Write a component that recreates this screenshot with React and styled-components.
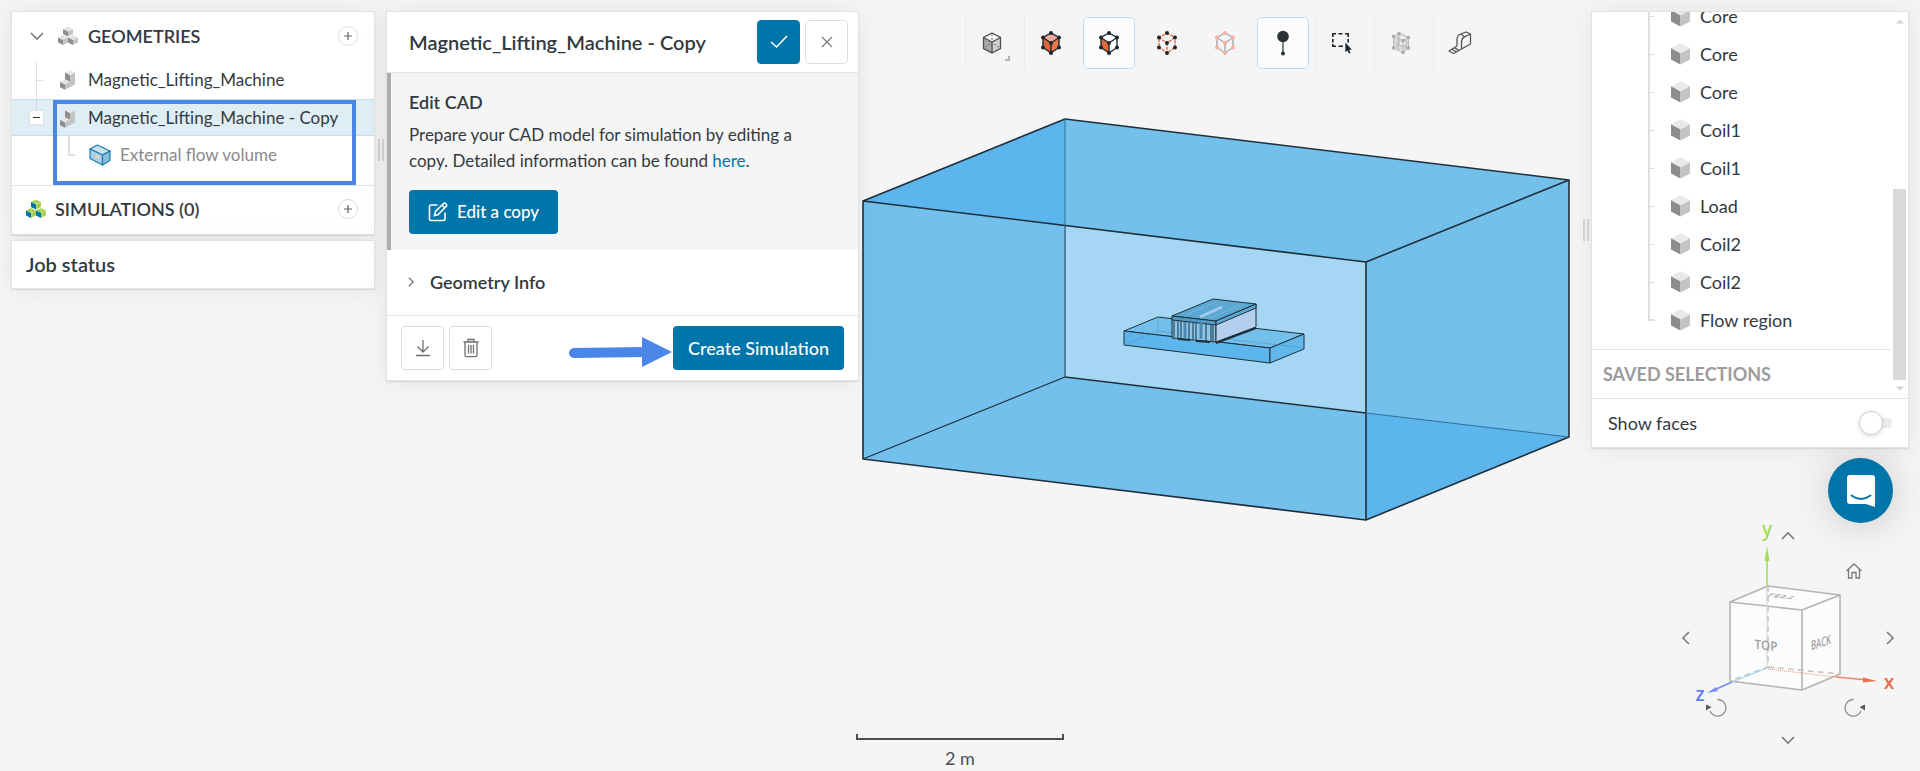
import React from "react";
import styled, { createGlobalStyle, css } from "styled-components";

const bodies = ["Core", "Core", "Core", "Coil1", "Coil1", "Load", "Coil2", "Coil2", "Flow region"];

const IsoCube = ({ x, y, s, top, left, right }) => {
  const h = s / 2;
  return (
    <g>
      <polygon fill={top} points={`${x},${y - s} ${x + s},${y - h} ${x},${y} ${x - s},${y - h}`} />
      <polygon fill={left} points={`${x - s},${y - h} ${x},${y} ${x},${y + s} ${x - s},${y + h}`} />
      <polygon fill={right} points={`${x + s},${y - h} ${x},${y} ${x},${y + s} ${x + s},${y + h}`} />
    </g>
  );
};

const CubesIcon = ({ top, left, right, dots }) => (
  <svg width="20" height="20" viewBox="0 0 20 20" aria-hidden="true">
    <IsoCube x={10} y={5.5} s={5} top={top} left={left} right={right} />
    <IsoCube x={5} y={14} s={5} top={top} left={left} right={right} />
    <IsoCube x={15} y={14} s={5} top={top} left={left} right={right} />
    {dots && (
      <g fill="#e0603a">
        {[[8, 3], [12, 2.6], [13, 6.5], [3.5, 11.4], [7, 11.6], [8, 15.2], [13.5, 11.4], [17, 11.8], [17.8, 15], [12, 8.6]].map(
          ([cx, cy]) => (
            <circle key={`${cx}-${cy}`} cx={cx} cy={cy} r="0.6" />
          )
        )}
      </g>
    )}
  </svg>
);

const PartIcon = () => (
  <svg width="16" height="20" viewBox="0 0 16 20" aria-hidden="true">
    <polygon fill="#e9e9e9" points="5,2.6 10,0 15,2.6 10,5.2" />
    <polygon fill="#8d8d8d" points="5,2.6 10,5.2 10,11.8 5,9.4" />
    <polygon fill="#e4e4e4" points="0,12 5,9.4 10,11.8 5,14.6" />
    <polygon fill="#8d8d8d" points="0,12 5,14.6 5,19.8 0,17.2" />
    <polygon fill="#c3c3c3" points="15,2.6 15,14.6 5,19.8 5,14.6 10,11.8 10,5.2" />
  </svg>
);

const FlowVolumeIcon = () => (
  <svg width="22" height="22" viewBox="0 0 22 22" aria-hidden="true">
    <g stroke="#1b7db3" strokeWidth="1.2" strokeLinejoin="round">
      <polygon fill="#c9e0ef" points="1,5 8.5,1 21,7 13.5,11" />
      <polygon fill="#a9cfe6" points="1,5 13.5,11 13.5,21 1,14.5" />
      <polygon fill="#86bcdc" points="13.5,11 21,7 21,16.5 13.5,21" />
    </g>
    <polygon fill="#d9d3cd" points="6,11 9,10.5 11,12 11,15.5 6,13.5" />
  </svg>
);

const BodyIcon = () => (
  <svg width="19" height="22" viewBox="0 0 19 22" aria-hidden="true">
    <polygon fill="#e9e9e9" points="9.5,0 19,5.2 9.5,10.4 0,5.2" />
    <polygon fill="#8c8c8c" points="0,5.2 9.5,10.4 9.5,21.6 0,16.4" />
    <polygon fill="#c4c4c4" points="19,5.2 9.5,10.4 9.5,21.6 19,16.4" />
  </svg>
);

const Chevron = ({ rotate = 0, width = 14, color = "#7a7a7a", stroke = 1.6 }) => (
  <svg width={width} height={width} viewBox="0 0 14 14" aria-hidden="true">
    <path
      d="M1 4 L7 10 L13 4"
      fill="none"
      stroke={color}
      strokeWidth={stroke}
      transform={`rotate(${rotate} 7 7)`}
    />
  </svg>
);

const PlusIcon = () => (
  <svg width="8" height="8" viewBox="0 0 8 8" aria-hidden="true">
    <path d="M4 0V8M0 4H8" stroke="#5f6366" strokeWidth="1.2" />
  </svg>
);

const vertices = [[11, 2], [19, 6.5], [19, 16.5], [11, 22], [3, 16.5], [3, 6.5], [11, 12]];

const PickIcon = ({ top = "none", left = "none", right = "none", line, dash, dot }) => (
  <svg width="22" height="24" viewBox="0 0 22 24" aria-hidden="true">
    <polygon points="11,2 19,6.5 11,12 3,6.5" fill={top} />
    <polygon points="3,6.5 11,12 11,22 3,16.5" fill={left} />
    <polygon points="19,6.5 11,12 11,22 19,16.5" fill={right} />
    <path
      d="M11 2L19 6.5V16.5L11 22L3 16.5V6.5ZM3 6.5L11 12L19 6.5M11 12V22"
      fill="none"
      stroke={line}
      strokeWidth="1.4"
      strokeDasharray={dash}
    />
    {vertices.map(([cx, cy]) => (
      <circle key={`${cx}-${cy}`} cx={cx} cy={cy} r="2" fill={dot} />
    ))}
  </svg>
);

const RenderIcon = () => (
  <svg width="22" height="24" viewBox="0 0 22 24" aria-hidden="true">
    <polygon points="11,2 19.5,6.5 11,11 2.5,6.5" fill="#f7f7f7" />
    <polygon points="2.5,6.5 11,11 11,22 2.5,17.5" fill="#a9a9a9" />
    <polygon points="19.5,6.5 11,11 11,22 19.5,17.5" fill="#cfcfcf" />
    <path
      d="M11 2L19.5 6.5V17.5L11 22L2.5 17.5V6.5ZM2.5 6.5L11 11L19.5 6.5M11 11V22"
      fill="none"
      stroke="#4e4e4e"
      strokeWidth="1.3"
    />
    <path d="M11 3V9M4 16L9 13M13 13L18 16" stroke="#666" strokeDasharray="2 2" />
  </svg>
);

const PinIcon = () => (
  <svg width="14" height="26" viewBox="0 0 14 26" aria-hidden="true">
    <path d="M7 6V23" stroke="#2b3135" strokeWidth="1.2" />
    <circle cx="7" cy="6.5" r="5.8" fill="#2b3135" />
    <circle cx="7" cy="23.5" r="2" fill="#2b3135" />
  </svg>
);

const BoxSelectIcon = () => (
  <svg width="22" height="22" viewBox="0 0 22 22" aria-hidden="true">
    <path
      d="M1.8 5V1.8H5M7.5 1.8H11.5M14 1.8H17.2V5M1.8 7V10.5M17.2 7V10.5M1.8 12V14.2H5M7.5 14.2H12"
      fill="none"
      stroke="#1d262c"
      strokeWidth="1.6"
    />
    <path d="M14.4 10.5V20.2L16.5 18.4L17.9 21.6L19.5 20.9L18.1 17.8H20.8Z" fill="#1d262c" />
  </svg>
);

const MeshIcon = () => (
  <svg width="20" height="24" viewBox="0 0 20 24" aria-hidden="true">
    <path
      d="M8 2L17.5 6.5V17L12 21.5L2.5 17V5.5ZM2.5 5.5L12 9.5L17.5 6.5M12 9.5V21.5M7.2 7.5V19M2.5 11L12 15.5L17.5 12M15 8V19M8 2V14L2.5 17M8 14L17.5 17"
      fill="#dedede"
      stroke="#b9b9b9"
    />
    {[[8, 2.5], [17.5, 6.5], [17.5, 17], [12, 21.5], [2.5, 17], [2.5, 5.5], [12, 9.5]].map(([cx, cy]) => (
      <circle key={`${cx}-${cy}`} cx={cx} cy={cy} r="1.8" fill="#ababab" />
    ))}
  </svg>
);

const TapeIcon = () => (
  <svg width="24" height="24" viewBox="0 0 24 24" aria-hidden="true">
    <path
      d="M9 15V8Q9.5 4 12.5 3L18 1L22.5 3V13L13.500 18V10Q13.800 7 16.500 5.800L22.5 3M12.500 3L16.500 5.800M9 15L1 20L5.500 22.500L13.500 18M4 18.300L8.500 21M6.500 16.600L11 19.500"
      fill="none"
      stroke="#4f5357"
      strokeWidth="1.3"
      strokeLinejoin="round"
    />
  </svg>
);

const tools = [
  [{ name: "Render mode", icon: <RenderIcon />, menu: true }],
  [
    { name: "Select volumes", icon: <PickIcon top="#f0aaa0" left="#e2683a" right="#e8794e" line="#1d262c" dot="#1d262c" /> },
    { name: "Select faces", icon: <PickIcon left="#e2683a" top="#fff" right="#fff" line="#1d262c" dot="#1d262c" />, active: true },
    { name: "Select edges", icon: <PickIcon line="#e8683c" dash="3 1" dot="#1d262c" /> },
    { name: "Select vertices", icon: <PickIcon line="#a8a8a8" dot="#f7aea3" /> },
    { name: "Probe point", icon: <PinIcon />, active: true },
  ],
  [{ name: "Box select", icon: <BoxSelectIcon /> }],
  [{ name: "Mesh", icon: <MeshIcon /> }],
  [{ name: "Measure", icon: <TapeIcon /> }],
];

const Model = () => (
  <ModelSvg viewBox="861 116 710 405" role="img" aria-label="Flow region around the lifting machine">
    <polygon fill="#74c0ed" points="863,200 1065,118 1569,179 1569,436 1366,519 863,458" />
    <polygon fill="#a5d6f3" points="1065,225 1366,261 1366,412 1065,376" />
    <polygon fill="#5cb5ec" points="863,200 1065,118 1065,225" />
    <polygon fill="#5cb5ec" points="1366,412 1569,436 1366,519" />
    <g fill="none" stroke="#1f2f3a" strokeWidth="1.6" strokeLinejoin="round">
      <path d="M863 200L1065 118L1569 179L1366 261ZM863 200V458L1366 519L1569 436V179M1366 261V519" />
      <path d="M863 458L1065 376L1366 412" strokeWidth="1.3" />
      <path d="M1065 225V376" stroke="#2f5873" strokeWidth="1.3" />
      <path d="M1065 118V225M1366 412L1569 436" stroke="#2f6f99" strokeWidth="1" />
    </g>
    <g stroke="#1f2f3a" strokeLinejoin="round">
      <polygon fill="#74c0ed" points="1124,330 1158,316 1304,333 1270,347" />
      <polygon fill="#5cb5ec" points="1124,330 1270,347 1270,362 1124,344" />
      <polygon fill="#62b8ec" points="1270,347 1304,333 1304,348 1270,362" />
      <path d="M1124 344L1158 330L1304 347M1158 316V330" stroke="#4f94bd" fill="none" strokeWidth="0.6" />
      <polygon fill="#8ec6e8" points="1172,316 1216,321 1216,341 1172,337" />
      <polygon fill="#b4cfee" points="1216,321 1256,303 1256,326 1216,341" />
      <polygon fill="#5ba9d3" points="1172,315 1213,298 1256,303 1216,320" />
      <polygon fill="#4f9cc9" points="1172,315 1216,320 1216,324 1172,319" />
      <polygon fill="#5ba9d3" points="1216,320 1256,303 1256,307 1216,324" />
    </g>
    <path d="M1200 316L1222 306" stroke="#a3cdec" strokeWidth="3" />
    <path d="M1186 314L1214 302M1208 318L1240 304" stroke="#79b7da" />
    <path d="M1174 320V337M1178 320V337M1181 320V338M1189 321V338M1193 321V338M1196 321V339M1206 322V340M1211 323V341M1213 323V341" stroke="#294b61" strokeWidth="1.2" />
    <path d="M1185 321V337M1201 322V338" stroke="#4d89b0" strokeWidth="3" />
    <path d="M1178 338L1190 339M1196 340L1210 341M1216 342L1256 327" stroke="#1f2f3a" strokeWidth="2" />
  </ModelSvg>
);

const ViewCube = () => (
  <svg width="218" height="232" viewBox="1680 520 218 232" overflow="visible" role="img" aria-label="View cube">
    <polygon fill="#fbfcfc" points="1730,601 1768,585 1840,594 1840,673 1802,689 1730,680" />
    <g fill="none" stroke="#b3b3b3" strokeWidth="1.6" strokeLinejoin="round">
      <path d="M1730 601L1768 585L1840 594L1802 609ZM1730 601V680L1802 689V609M1802 689L1840 673V594" />
      <path d="M1768 585V666L1730 680M1768 666L1840 673" stroke="#c6c6c6" strokeDasharray="6 4" />
    </g>
    <path d="M1767 586V666" stroke="#d3d3d3" />
    <path d="M1767 585V558" stroke="#a3dd57" strokeWidth="1.6" />
    <polygon fill="#a3dd57" points="1767,545 1769.5,560 1764.5,560" />
    <path d="M1767 667L1732 681" stroke="#92cdf2" />
    <path d="M1732 681L1712 690" stroke="#6d8df5" strokeWidth="1.4" />
    <polygon fill="#7b93f7" points="1707,692 1716,686 1718,690" />
    <path d="M1768 668L1836 676" stroke="#f08a70" strokeDasharray="1 1" />
    <path d="M1836 676L1868 679" stroke="#ee8468" strokeWidth="1.6" />
    <polygon fill="#ea7152" points="1877,680 1863,681.5 1863,676.5" />
    <AxisLabel x="1767" y="535" fill="#a3dd57">y</AxisLabel>
    <AxisLabel x="1889" y="688" fill="#ea6a45">x</AxisLabel>
    <AxisLabel x="1700" y="700" fill="#5c7ff3">z</AxisLabel>
    <FaceLabel transform="matrix(0.9 0.1 0 1 1766 649)">TOP</FaceLabel>
    <FaceLabel transform="matrix(0.6 -0.2 0 1 1821 646)">BACK</FaceLabel>
    <FaceLabel transform="matrix(0.9 0.1 0.6 -0.3 1784 594)">LEFT</FaceLabel>
  </svg>
);

const RotateIcon = ({ flip }) => (
  <svg width="22" height="20" viewBox="0 0 22 20" aria-hidden="true">
    <g transform={flip ? "translate(22 0) scale(-1 1)" : undefined}>
      <path d="M12.5 1.5A8.3 8.3 0 1 1 5 13" fill="none" stroke="#8e8e8e" strokeWidth="1.3" />
      <path d="M1 6.5L6.5 9L1 12.5Z" fill="#5a5a5a" />
    </g>
  </svg>
);

const App = () => (
  <>
    <GlobalStyle />
    <Page>
      <Workspace>
        <Column>
          <Panel>
            <SectionRow>
              <ToggleButton aria-label="Collapse geometries">
                <Chevron />
              </ToggleButton>
              <IconCell>
                <CubesIcon top="#e4e4e4" left="#8f8f8f" right="#c4c4c4" />
              </IconCell>
              <SectionTitle>GEOMETRIES</SectionTitle>
              <AddButton aria-label="Add geometry">
                <PlusIcon />
              </AddButton>
            </SectionRow>
            <Tree>
              <TreeRow>
                <GuideCell>
                  <Guide $narrow />
                </GuideCell>
                <IconCell>
                  <PartIcon />
                </IconCell>
                Magnetic_Lifting_Machine
              </TreeRow>
              <TreeRow $selected>
                <GuideCell $line>
                  <CollapseButton aria-label="Collapse copy">
                    <svg width="7" height="1" aria-hidden="true">
                      <rect width="7" height="1" fill="#333" />
                    </svg>
                  </CollapseButton>
                </GuideCell>
                <IconCell>
                  <PartIcon />
                </IconCell>
                Magnetic_Lifting_Machine - Copy
              </TreeRow>
              <TreeRow $child>
                <Guide $last />
                <IconCell $wide>
                  <FlowVolumeIcon />
                </IconCell>
                External flow volume
              </TreeRow>
            </Tree>
            <SectionRow $divided>
              <CubesIcon top="#a6e05a" left="#0073a8" right="#a6d95c" dots />
              <SectionTitle $inset>SIMULATIONS (0)</SectionTitle>
              <AddButton aria-label="Add simulation">
                <PlusIcon />
              </AddButton>
            </SectionRow>
            <Highlight />
          </Panel>
          <Panel>
            <JobStatus>Job status</JobStatus>
          </Panel>
        </Column>

        <DragHandle $top={128} />

        <Column>
          <Panel>
            <PanelHeader>
              <PanelTitle>Magnetic_Lifting_Machine - Copy</PanelTitle>
              <SquareButton $primary aria-label="Apply">
                <svg width="18" height="14" viewBox="0 0 18 14" aria-hidden="true">
                  <path d="M1 7L6.5 12L17 1" fill="none" stroke="#fff" strokeWidth="1.6" />
                </svg>
              </SquareButton>
              <SquareButton aria-label="Close">
                <svg width="12" height="12" viewBox="0 0 12 12" aria-hidden="true">
                  <path d="M1 1L11 11M11 1L1 11" stroke="#7d7d7d" strokeWidth="1.3" />
                </svg>
              </SquareButton>
            </PanelHeader>
            <EditSection>
              <SubTitle>Edit CAD</SubTitle>
              <Description>
                Prepare your CAD model for simulation by editing a copy. Detailed information can be found{" "}
                <a href="#here">here</a>.
              </Description>
              <PrimaryButton>
                <svg width="20" height="20" viewBox="0 0 20 20" fill="none" stroke="#fff" strokeWidth="1.6" aria-hidden="true">
                  <path d="M9.5 3H3Q1.5 3 1.5 4.5V17Q1.5 18.5 3 18.5H15.5Q17 18.5 17 17V10.5" />
                  <path d="M6.5 13.5L7.5 9.5L15.5 1.5Q16.5 0.7 17.8 1.8Q19.2 3.2 18.3 4.3L10.2 12.5ZM14 3L16.8 5.8" />
                </svg>
                Edit a copy
              </PrimaryButton>
            </EditSection>
            <InfoRow>
              <Chevron rotate={-90} width={10} stroke={1.8} />
              Geometry Info
            </InfoRow>
            <PanelFooter>
              <SquareButton aria-label="Download">
                <svg width="16" height="18" viewBox="0 0 16 18" fill="none" stroke="#6e6e6e" strokeWidth="1.3" aria-hidden="true">
                  <path d="M8 1V12.5M2.5 7.5L8 13L13.5 7.5M1 16.5H15" />
                </svg>
              </SquareButton>
              <SquareButton aria-label="Delete">
                <svg width="16" height="20" viewBox="0 0 16 20" fill="none" stroke="#6e6e6e" strokeWidth="1.3" aria-hidden="true">
                  <path d="M0.5 4H15.5M5 3.5V1.5H11V3.5M2 4V17Q2 18.7 3.7 18.7H12.3Q14 18.7 14 17V4M5.5 7V15.5M8 7V15.5M10.5 7V15.5" />
                </svg>
              </SquareButton>
              <Spacer />
              <Pointer viewBox="0 0 103 31" aria-hidden="true">
                <path d="M5 16L76 15" stroke="#4a86e8" strokeWidth="10" strokeLinecap="round" />
                <polygon points="73,0 103,15 73,30" fill="#4a86e8" />
              </Pointer>
              <PrimaryButton $compact>Create Simulation</PrimaryButton>
            </PanelFooter>
          </Panel>
        </Column>

        <Viewer>
          <Toolbar>
            {tools.map((group) => (
              <ToolGroup key={group[0].name}>
                {group.map((tool) => (
                  <ToolButton key={tool.name} aria-label={tool.name} $active={tool.active}>
                    {tool.icon}
                    {tool.menu && <MenuMark />}
                  </ToolButton>
                ))}
              </ToolGroup>
            ))}
          </Toolbar>
          <Model />
        </Viewer>

        <DragHandle $top={208} />

        <Column>
          <Panel>
            <ScrollArea>
              <ScrollContent>
                <BodyList>
                  {bodies.map((body, i) => (
                    <TreeRow as="li" key={i} $body>
                      <Guide $last={i === bodies.length - 1} />
                      <IconCell $wide>
                        <BodyIcon />
                      </IconCell>
                      {body}
                    </TreeRow>
                  ))}
                </BodyList>
                <SavedSelections>SAVED SELECTIONS</SavedSelections>
              </ScrollContent>
              <ScrollBar>
                <svg width="8" height="5" viewBox="0 0 8 5" aria-hidden="true">
                  <path d="M0 4.5L4 0.5L8 4.5Z" fill="#cfcfcf" />
                </svg>
                <ScrollThumb />
                <svg width="8" height="5" viewBox="0 0 8 5" aria-hidden="true">
                  <path d="M0 0.5L4 4.5L8 0.5Z" fill="#cfcfcf" />
                </svg>
              </ScrollBar>
            </ScrollArea>
            <FacesRow>
              <label htmlFor="show-faces">Show faces</label>
              <Switch id="show-faces" type="checkbox" />
            </FacesRow>
          </Panel>
          <ChatButton aria-label="Open chat">
            <svg width="30" height="34" viewBox="0 0 30 34" aria-hidden="true">
              <path d="M4 1H26Q29 1 29 4V33L20 30H4Q1 30 1 27V4Q1 1 4 1Z" fill="#fff" />
              <path d="M5.5 21.5Q15 28.5 24.5 21.5" fill="none" stroke="#0075a9" strokeWidth="2" strokeLinecap="round" />
            </svg>
          </ChatButton>
          <ViewNav>
            <ViewCube />
            <NavButton aria-label="Rotate up" $x={108} $y={15}>
              <Chevron rotate={180} />
            </NavButton>
            <NavButton aria-label="Home view" $x={174} $y={50}>
              <svg width="16" height="16" viewBox="0 0 16 16" fill="none" stroke="#7a7a7a" strokeWidth="1.3" aria-hidden="true">
                <path d="M0.5 8L8 1L15.5 8M2.5 6.5V15H6V9.5H10V15H13.5V6.5" />
              </svg>
            </NavButton>
            <NavButton aria-label="Rotate left" $x={6} $y={117}>
              <Chevron rotate={90} />
            </NavButton>
            <NavButton aria-label="Rotate right" $x={210} $y={117}>
              <Chevron rotate={-90} />
            </NavButton>
            <NavButton aria-label="Roll left" $x={36} $y={187}>
              <RotateIcon />
            </NavButton>
            <NavButton aria-label="Roll right" $x={175} $y={187}>
              <RotateIcon flip />
            </NavButton>
            <NavButton aria-label="Rotate down" $x={108} $y={219}>
              <Chevron />
            </NavButton>
          </ViewNav>
        </Column>
      </Workspace>

      <Scale>
        <ScaleBar />
        2 m
      </Scale>
    </Page>
  </>
);

const GlobalStyle = createGlobalStyle`
  * {
    box-sizing: border-box;
  }

  body {
    margin: 0;
    background: #f5f5f5;
    color: #333a3f;
    font-family: Lato, "Open Sans", sans-serif;
    font-size: 18px;
    line-height: 26px;
  }

  button {
    padding: 0;
    border: 0;
    background: none;
    color: inherit;
    font: inherit;
    cursor: pointer;
  }

  svg {
    display: block;
    flex: none;
  }

  h1, h2, p, ul {
    margin: 0;
    padding: 0;
  }
`;

const Page = styled.div`
  display: grid;
  min-height: 100vh;

  > * {
    grid-area: 1 / 1;
  }
`;

const Workspace = styled.div`
  display: grid;
  grid-template-columns: 364px 11px 473px 1fr 11px 318px;
  padding: 11px 11px 0;
`;

const Column = styled.div`
  display: flex;
  flex-direction: column;
  gap: 5px;
`;

const Panel = styled.section`
  position: relative;
  border: 1px solid #e3e3e3;
  background: #fff;
  box-shadow: 0 1px 24px rgba(0, 0, 0, 0.07), 0 1px 1px rgba(0, 0, 0, 0.08);
`;

const SectionRow = styled.div`
  display: flex;
  align-items: center;
  height: 49px;
  padding: 0 16px 2px 14px;
  ${({ $divided }) => $divided && "border-top: 1px solid #e3e3e3;"}
`;

const ToggleButton = styled.button`
  display: flex;
  justify-content: center;
  width: 21px;
`;

const IconCell = styled.span`
  display: flex;
  justify-content: center;
  flex: none;
  width: ${({ $wide }) => ($wide ? 45 : 41)}px;
  ${({ $wide }) => $wide && "padding-left: 5px;"}
`;

const SectionTitle = styled.h2`
  flex: 1;
  margin-left: ${({ $inset }) => ($inset ? 9 : 0)}px;
  font-size: 18px;
  font-weight: 600;
`;

const AddButton = styled.button`
  display: flex;
  align-items: center;
  justify-content: center;
  width: 20px;
  height: 20px;
  border: 1px solid #dcdcdc;
  border-radius: 50%;
`;

const Tree = styled.div`
  padding-bottom: 11px;
  font-size: 17px;
`;

const TreeRow = styled.div`
  display: flex;
  align-items: center;
  height: 38px;
  padding-left: 14px;
  white-space: nowrap;

  ${({ $selected }) =>
    $selected &&
    css`
      height: 37px;
      border: solid #c3dfec;
      border-width: 1px 0;
      background: #dfedf5;
    `}

  ${({ $child }) =>
    $child &&
    css`
      padding-left: 56px;
      color: #8a8a8a;
    `}

  ${({ $body }) => $body && "padding-left: 56px;"}
`;

const GuideCell = styled.span`
  display: flex;
  align-items: center;
  align-self: stretch;
  justify-content: center;
  width: 21px;
  ${({ $line }) => $line && "background: linear-gradient(#ccd9e0 0 0) center top / 1px 11px no-repeat;"}
`;

const Guide = styled.span`
  flex: none;
  align-self: stretch;
  width: 7px;
  border-left: ${({ $narrow }) => ($narrow ? 1 : 2)}px solid #e0e0e0;
  background: linear-gradient(#e0e0e0 0 0) center / 100% 1px no-repeat;

  ${({ $narrow }) => $narrow && "margin-left: 6px;"}

  ${({ $last }) =>
    $last &&
    css`
      align-self: flex-start;
      height: 20px;
      border-bottom: 2px solid #e0e0e0;
      background: none;
    `}
`;

const CollapseButton = styled.button`
  display: flex;
  align-items: center;
  justify-content: center;
  width: 15px;
  height: 15px;
  border: 1px solid #e0e0e0;
  background: #fff;
`;

const Highlight = styled.div`
  position: absolute;
  top: 88px;
  left: 41px;
  width: 303px;
  height: 85px;
  border: 4px solid #4a86e8;
  pointer-events: none;
`;

const JobStatus = styled.h2`
  padding: 10px 14px 11px;
  font-size: 20px;
  font-weight: 600;
`;

const DragHandle = styled.div`
  justify-self: center;
  width: 6px;
  height: 22px;
  margin-top: ${({ $top }) => $top}px;
  border: solid #d6d6d6;
  border-width: 0 2px;
`;

const PanelHeader = styled.header`
  display: flex;
  align-items: center;
  gap: 5px;
  height: 61px;
  padding: 0 10px 0 22px;
  border-bottom: 1px solid #e3e3e3;
`;

const PanelTitle = styled.h1`
  flex: 1;
  font-size: 20px;
  font-weight: 600;
  white-space: nowrap;
`;

const SquareButton = styled.button`
  display: flex;
  align-items: center;
  justify-content: center;
  flex: none;
  width: 43px;
  height: 44px;
  border: 1px solid ${({ $primary }) => ($primary ? "#0075a9" : "#dedede")};
  border-radius: 4px;
  background: ${({ $primary }) => ($primary ? "#0075a9" : "#fff")};
`;

const EditSection = styled.div`
  padding: 16px 18px;
  border-left: 4px solid #adadad;
  background: #f5f5f5;
`;

const SubTitle = styled.h2`
  font-size: 18px;
  font-weight: 600;
`;

const Description = styled.p`
  margin: 7px 0 16px;
  padding-right: 28px;
  font-size: 17px;

  a {
    color: #0075a9;
    text-decoration: none;
  }
`;

const PrimaryButton = styled.button`
  display: flex;
  align-items: center;
  gap: 9px;
  height: 44px;
  padding: 0 ${({ $compact }) => ($compact ? 15 : 19)}px;
  border-radius: 4px;
  background: #0075a9;
  color: #fff;
  font-size: ${({ $compact }) => ($compact ? 18 : 17)}px;
  font-weight: 500;
  white-space: nowrap;
`;

const InfoRow = styled.div`
  display: flex;
  align-items: center;
  gap: 14px;
  height: 65px;
  padding: 0 0 2px 19px;
  font-weight: 600;
`;

const PanelFooter = styled.footer`
  display: flex;
  align-items: center;
  gap: 5px;
  height: 65px;
  padding: 0 14px;
  border-top: 1px solid #e3e3e3;
`;

const Spacer = styled.span`
  flex: 1;
`;

const Pointer = styled.svg`
  width: 103px;
  height: 31px;
  margin: 8px -4px 0 0;
`;

const Viewer = styled.main`
  display: flex;
  flex-direction: column;
  align-items: center;
  gap: 48px;
  padding: 6px 0 0 2px;
`;

const Toolbar = styled.div`
  display: flex;
  gap: 6px;
  margin-left: 10px;
`;

const ToolGroup = styled.div`
  display: flex;
  gap: 6px;
  border-left: 1px solid #ebebeb;
`;

const ToolButton = styled.button`
  position: relative;
  display: flex;
  align-items: center;
  justify-content: center;
  width: 52px;
  height: 52px;
  border: 1px solid ${({ $active }) => ($active ? "#bcdcee" : "transparent")};
  border-radius: 5px;
  background: ${({ $active }) => ($active ? "#fbfdfd" : "none")};
`;

const MenuMark = styled.i`
  position: absolute;
  right: 7px;
  bottom: 7px;
  width: 5px;
  height: 5px;
  border: solid #b5b5b5;
  border-width: 0 2px 2px 0;
`;

const ModelSvg = styled.svg`
  align-self: flex-start;
  width: 100%;
  max-width: 710px;
`;

const ScrollArea = styled.div`
  display: flex;
  overflow: hidden;
`;

const ScrollContent = styled.div`
  flex: 1;
`;

const BodyList = styled.ul`
  margin-top: -15px;
  padding-bottom: 10px;
  list-style: none;
`;

const SavedSelections = styled.h2`
  padding: 11px;
  border-top: 1px solid #e3e3e3;
  color: #9c9c9c;
  font-size: 18px;
  font-weight: 700;
`;

const ScrollBar = styled.div`
  display: flex;
  flex-direction: column;
  align-items: center;
  gap: 6px;
  width: 17px;
  padding: 7px 0;
`;

const ScrollThumb = styled.span`
  width: 13px;
  height: 191px;
  margin-top: auto;
  background: #d9d9d9;
`;

const FacesRow = styled.div`
  display: flex;
  align-items: center;
  justify-content: space-between;
  height: 49px;
  padding: 0 16px;
  border-top: 1px solid #e3e3e3;
`;

const Switch = styled.input`
  appearance: none;
  display: flex;
  align-items: center;
  width: 33px;
  height: 22px;
  margin: 0;
  background: linear-gradient(#ececec 0 0) right center / 20px 10px no-repeat;
  border-radius: 11px;

  &::before {
    content: "";
    width: 22px;
    height: 22px;
    border: 1px solid #cfcfcf;
    border-radius: 50%;
    background: #fff;
    box-shadow: 0 1px 4px rgba(0, 0, 0, 0.15);
  }
`;

const ChatButton = styled.button`
  display: flex;
  align-items: center;
  align-self: flex-end;
  justify-content: center;
  width: 65px;
  height: 65px;
  margin: 5px 16px 0 0;
  border-radius: 50%;
  background: #0075a9;
  box-shadow: 0 2px 40px rgba(0, 0, 0, 0.18);
`;

const ViewNav = styled.div`
  position: relative;
  align-self: flex-end;
  width: 218px;
  height: 232px;
  margin: -7px 11px 0 0;
`;

const NavButton = styled.button`
  position: absolute;
  top: ${({ $y }) => $y}px;
  left: ${({ $x }) => $x}px;
  transform: translate(-50%, -50%);
`;

const AxisLabel = styled.text`
  font-family: "Open Sans", sans-serif;
  font-size: 19px;
  font-weight: 600;
  text-anchor: middle;
`;

const FaceLabel = styled.text`
  fill: #a0a0a0;
  font-family: "Open Sans", sans-serif;
  font-size: 13px;
  font-weight: 600;
  text-anchor: middle;
`;

const Scale = styled.div`
  align-self: end;
  justify-self: center;
  width: 208px;
  color: #4c5054;
  text-align: center;
  pointer-events: none;
`;

const ScaleBar = styled.div`
  height: 6px;
  margin-bottom: 5px;
  border: 2px solid #4a4c50;
  border-top: 0;
`;

export default App;
